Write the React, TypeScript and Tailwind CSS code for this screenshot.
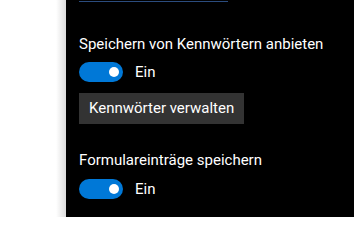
export default function App() {
    const font = { fontFamily: 'Roboto, "Noto Sans", sans-serif' };

    const Toggle = ({ label }: { label: string }) => (
        <div className="flex items-center gap-[12px]">
            <div className="flex h-[20px] w-[44px] items-center justify-end rounded-full bg-[#0078d7] pr-[4px]">
                <div className="h-[10px] w-[10px] rounded-full bg-white" />
            </div>
            <span className="text-[15px] leading-[20px] text-white">{label}</span>
        </div>
    );

    return (
        <div className="flex h-[217px] w-[354px] overflow-hidden" style={font}>
            <div className="w-[66px] shrink-0 bg-gradient-to-r from-white from-[85%] to-[#dcdcdc]" />
            <div className="flex flex-1 flex-col bg-black pl-[13px]">
                <div className="mt-[1px] h-px w-[149px] bg-[#2b4c7e]" />

                <div className="mt-[32px] whitespace-nowrap text-[15px] leading-[20px] text-white">
                    Speichern von Kennwörtern anbieten
                </div>
                <div className="mt-[8px]">
                    <Toggle label="Ein" />
                </div>
                <button className="mt-[11px] flex h-[31px] w-[165px] items-center whitespace-nowrap bg-[#333333] px-[10px] text-[15px] text-white">
                    Kennwörter verwalten
                </button>

                <div className="mt-[26px] whitespace-nowrap text-[15px] leading-[20px] text-white">
                    Formulareinträge speichern
                </div>
                <div className="mt-[9px]">
                    <Toggle label="Ein" />
                </div>
            </div>
        </div>
    );
}
